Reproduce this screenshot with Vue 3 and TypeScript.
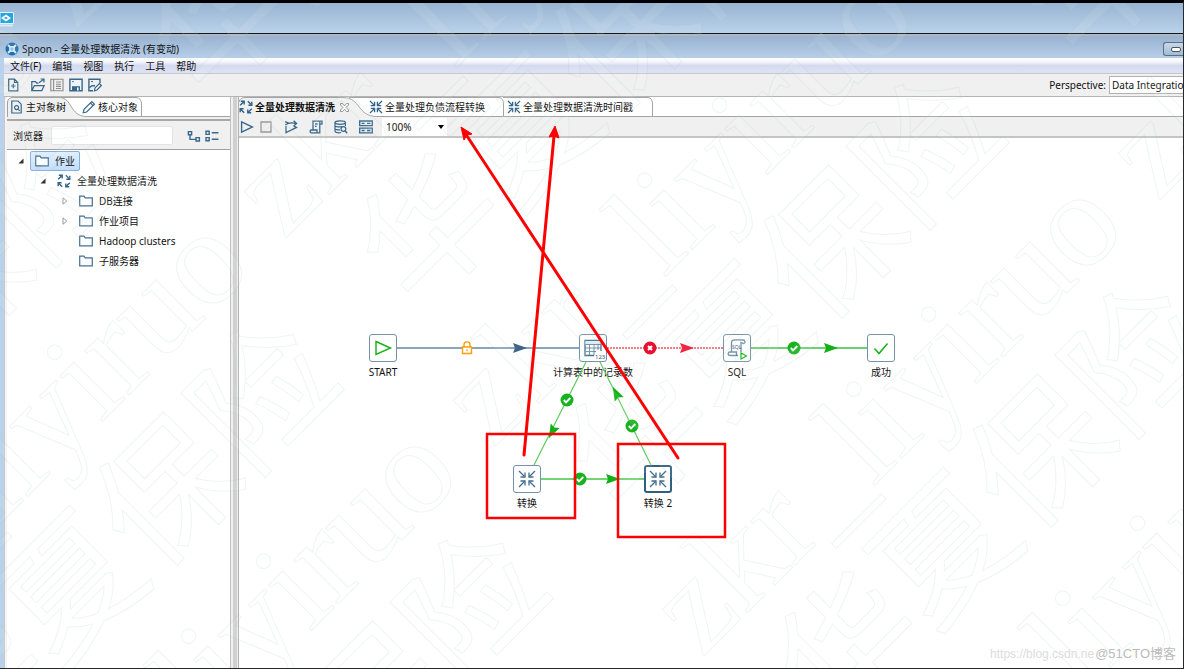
<script setup lang="ts">
import { ref } from 'vue'

interface Pt { x: number; y: number }
interface JobNode extends Pt { id: string; label: string; icon: string; active?: boolean }
interface TreeItem { label: string; icon: string; level: number; toggle: 'open' | 'closed' | 'none'; selected?: boolean }

const menus: string[] = ['文件(F)', '编辑', '视图', '执行', '工具', '帮助']

const fileTools = [
  { id: 'new', name: '新建' },
  { id: 'open', name: '打开' },
  { id: 'list', name: '浏览' },
  { id: 'save', name: '保存' },
  { id: 'saveas', name: '另存为' },
]

const runTools = [
  { id: 'run', name: '运行' },
  { id: 'stop', name: '停止' },
  { id: 'replay', name: '重放' },
  { id: 'script', name: '生成 SQL' },
  { id: 'dbsearch', name: '探测数据库' },
  { id: 'grid', name: '显示结果' },
]

const tree: TreeItem[] = [
  { label: '作业', icon: 'folder', level: 0, toggle: 'open', selected: true },
  { label: '全量处理数据清洗', icon: 'job', level: 1, toggle: 'open' },
  { label: 'DB连接', icon: 'folder', level: 2, toggle: 'closed' },
  { label: '作业项目', icon: 'folder', level: 2, toggle: 'closed' },
  { label: 'Hadoop clusters', icon: 'folder', level: 2, toggle: 'none' },
  { label: '子服务器', icon: 'folder', level: 2, toggle: 'none' },
]

// Node centres, in canvas coordinates
const nodes: JobNode[] = [
  { id: 'start', label: 'START', icon: 'n-start', x: 144, y: 210 },
  { id: 'count', label: '计算表中的记录数', icon: 'n-table', x: 354, y: 210 },
  { id: 'sql', label: 'SQL', icon: 'n-sql', x: 498, y: 210 },
  { id: 'ok', label: '成功', icon: 'n-ok', x: 642, y: 210 },
  { id: 't1', label: '转换', icon: 'n-trans', x: 288, y: 341 },
  { id: 't2', label: '转换 2', icon: 'n-trans', x: 419, y: 341, active: true },
]

const checks: Pt[] = [
  { x: 555, y: 210 },
  { x: 328, y: 262 },
  { x: 393, y: 288 },
  { x: 341, y: 341 },
]

const arrows = [
  { x: 281, y: 210, a: 0, c: 'slate' },
  { x: 448, y: 210, a: 0, c: 'red' },
  { x: 592, y: 210, a: 0, c: 'green' },
  { x: 313, y: 294, a: 117, c: 'green' },
  { x: 377, y: 255, a: -117, c: 'green' },
  { x: 374, y: 341, a: 0, c: 'green' },
]

// Watermark lattice along the two diagonals; only tiles that reach the page are kept
const marks: Pt[] = []
for (let col = -1; col <= 1; col++) {
  for (let row = -1; row <= 4; row++) {
    const u = 44 + 912 * col
    const v = 105 + 418 * row
    const x = Math.round((u + v) / 2)
    const y = Math.round((v - u) / 2)
    if (x > -420 && x < 1184 && y > -80 && y < 1080) marks.push({ x, y })
  }
}

const search = ref('')
const zoom = ref('100%')
const perspective = ref('Data Integration')
</script>

<template>
  <div class="page">
    <svg class="defs" aria-hidden="true">
      <symbol id="job" viewBox="0 0 14 14">
        <g stroke="#2f6288" stroke-width="1.4" fill="none">
          <path d="M1.200 5.200 L5 1.400 M8.800 1.200 L12.600 5 M5.200 12.800 L1.400 9 M12.800 8.800 L9 12.600" />
          <path d="M1.800 1.200 H5.200 V4.600 M12.800 1.800 V5.200 H9.400 M1.200 12.200 V8.800 H4.600 M8.800 9.400 V12.800 H12.200" />
        </g>
      </symbol>
      <symbol id="trans" viewBox="0 0 14 14">
        <g stroke="#2f6288" stroke-width="1.3" fill="none">
          <path d="M1 1 L5.4 5.4 M13 1 L8.6 5.4 M1 13 L5.4 8.6 M13 13 L8.6 8.6" />
          <path d="M5.6 1.8 V5.6 H1.8 M8.4 1.8 V5.6 H12.2 M1.8 8.4 H5.6 V12.2 M12.2 8.4 H8.4 V12.2" />
        </g>
      </symbol>
      <symbol id="folder" viewBox="0 0 14 14">
        <path d="M.7 2.2 H5 L6.2 3.9 H13.3 V11.8 H.7 Z" fill="#fbfdff" stroke="#456f90" stroke-width="1.2" />
      </symbol>
      <symbol id="new" viewBox="0 0 14 14">
        <path d="M1.7 1.2 H7.5 L10.8 4.5 V12.8 H1.7 Z M7.5 1.2 V4.5 H10.8 M4 8 H8.6 M6.3 5.7 V10.3" fill="none" stroke="#38688b" stroke-width="1.2" />
      </symbol>
      <symbol id="open" viewBox="0 0 14 14">
        <path d="M.8 12.6 V3.6 H4.6 L5.8 5.2 H7.5 M.8 12.6 L3.4 7.6 H13.2 L10.8 12.6 Z M8 4.8 L12.4 1.6 M9.6 1 H13 V4.4" fill="none" stroke="#38688b" stroke-width="1.2" />
      </symbol>
      <symbol id="list" viewBox="0 0 14 14">
        <path d="M.8 1.2 H13 V12.8 H.8 Z M3.6 1.2 V12.8 M6 4 H11 M6 6.2 H11 M6 8.4 H11 M6 10.5 H11" fill="none" stroke="#8b8b8b" stroke-width="1.1" />
      </symbol>
      <symbol id="save" viewBox="0 0 14 14">
        <path d="M.9 1.2 H13.1 V12.8 H.9 Z" fill="#eef4f8" stroke="#38688b" stroke-width="1.4" />
        <path d="M3 8.2 H11 V12.6 H3 Z" fill="#38688b" />
        <path d="M8 9.6 H9.6 V12.4 H8 Z" fill="#fff" />
        <path d="M3.2 3.6 H4.8" stroke="#38688b" />
      </symbol>
      <symbol id="saveas" viewBox="0 0 14 14">
        <path d="M12 5 V1.2 H.9 V12.8 H5 M1 10 L4 7.8 H7" fill="none" stroke="#38688b" stroke-width="1.4" />
        <path d="M3 3.6 H5" stroke="#38688b" />
        <path d="M6.4 12.8 L7 10 L11.4 5.6 L13.3 7.5 L9 12 Z" fill="#fff" stroke="#38688b" stroke-width="1.2" />
      </symbol>
      <symbol id="doc" viewBox="0 0 14 14">
        <path d="M1.8 1 H8 L11.2 4.2 V13 H1.8 Z M8.4 9.4 L9.6 11" fill="none" stroke="#38688b" stroke-width="1.2" />
        <circle cx="6.6" cy="7.6" r="2" fill="none" stroke="#38688b" stroke-width="1.1" />
      </symbol>
      <symbol id="pencil" viewBox="0 0 14 14">
        <path d="M1.2 12.8 L2 9.4 L9.8 1.6 L12.4 4.2 L4.6 12 Z M8.4 3 L11 5.6" fill="#fff" stroke="#38688b" stroke-width="1.2" />
      </symbol>
      <symbol id="run" viewBox="0 0 14 14">
        <path d="M1.6 1.8 L12.6 7 L1.6 12.2 Z" fill="none" stroke="#38688b" stroke-width="1.4" />
      </symbol>
      <symbol id="stop" viewBox="0 0 14 14">
        <path d="M2 2 H12 V12 H2 Z" fill="none" stroke="#999" stroke-width="1.3" />
      </symbol>
      <symbol id="replay" viewBox="0 0 14 14">
        <path d="M2 6 V12.600 L12.500 7.400 L9.500 5.900 M1.200 1.600 L5 3.400 M1.200 5 C4 2.800 8 2.600 11.800 3.400 M9.600 .8 L12.600 3.500 L9.600 6" fill="none" stroke="#38688b" stroke-width="1.300" />
      </symbol>
      <symbol id="script" viewBox="0 0 14 14">
        <path d="M4 9.4 V1.2 H13 V4 H10.8 V12.8 H2.2 C.8 12.8 .8 10 2.2 10 H8 V12.6 M10.8 4 V1.4 M6 4 H8.6 M6 6.4 H7.6" fill="none" stroke="#38688b" stroke-width="1.3" />
      </symbol>
      <symbol id="dbsearch" viewBox="0 0 14 14">
        <path d="M1 2.6 V11 C1 13 6 13 7 12.4 M11.4 2.6 V6 M1 5.4 C1 7.2 7 7 8 6.4 M1 8.4 C1 9.8 4 10 6 9.8" fill="none" stroke="#38688b" stroke-width="1.2" />
        <ellipse cx="6.2" cy="2.6" rx="5.2" ry="1.7" fill="none" stroke="#38688b" stroke-width="1.2" />
        <circle cx="9.4" cy="9" r="2.4" fill="none" stroke="#38688b" stroke-width="1.2" />
        <path d="M11 10.8 L13.2 13.2" stroke="#38688b" stroke-width="1.4" />
      </symbol>
      <symbol id="grid" viewBox="0 0 14 14">
        <path d="M.7 1 H13.3 V5.6 H.7 Z M.7 8.2 H13.3 V12.9 H.7 Z" fill="#e6eef4" stroke="#38688b" stroke-width="1.3" />
        <path d="M2.6 3.3 H5.6 M8 3.3 H11.4 M2.6 10.5 H5.6 M8 10.5 H11.4" stroke="#38688b" stroke-width="1.3" />
      </symbol>
      <symbol id="treeexp" viewBox="0 0 14 14">
        <path d="M1.4 2.600 H4.6 V5.800 H1.4 Z M9 8.600 H12.4 V12 H9 Z M3 6 V10.400 H9" fill="none" stroke="#38688b" stroke-width="1.4" />
      </symbol>
      <symbol id="treecol" viewBox="0 0 14 14">
        <path d="M1 2.200 H4.200 V5.400 H1 Z M1 8.600 H4.200 V11.800 H1 Z M6.800 3.800 H13.400 M6.800 10.200 H13.400" fill="none" stroke="#38688b" stroke-width="1.4" />
      </symbol>
      <symbol id="n-start" viewBox="0 0 28 28">
        <path d="M7 7.5 L21.5 14 L7 20.5 Z" fill="#fff" stroke="#12b312" stroke-width="1.4" />
      </symbol>
      <symbol id="n-ok" viewBox="0 0 28 28">
        <path d="M7.5 14.5 L12 19.5 L20.5 9.5" fill="none" stroke="#12b312" stroke-width="1.5" />
      </symbol>
      <symbol id="n-table" viewBox="0 0 28 28">
        <path d="M15 21.5 H6 V6.5 H22 V17" fill="#fff" stroke="#44708f" stroke-width="1.3" />
        <path d="M6.5 7 H21.5 V10 H6.5 Z" fill="#d9edf3" />
        <path d="M6 10.5 H22 M6 14 H22 M6 17.6 H17 M10.5 10.5 V21.5 M15 10.5 V21.5 M19 10.5 V16" fill="none" stroke="#6d8da5" stroke-width="1" />
        <text x="16" y="25" font-size="6" fill="#35586f">123</text>
      </symbol>
      <symbol id="n-sql" viewBox="0 0 28 28">
        <path d="M8.5 17.5 V9 C8.500 5 11 6 20 6 C22.500 6 22.500 9.500 20.500 9.500 L18 8.500 V18 M15 21.500 H7 C4.500 21.500 4.500 18 7 18 H13.500 V21" fill="none" stroke="#6d8da5" stroke-width="1.300" />
        <text x="9" y="15" font-size="5" fill="#35586f">SQL</text>
        <path d="M18 19 L23.500 22 L18 25 Z" fill="#fff" stroke="#12b312" stroke-width="1.200" />
      </symbol>
      <symbol id="n-trans" viewBox="0 0 28 28">
        <g fill="none" stroke="#446d8d" stroke-width="1.3">
          <path d="M6 6 L12 12 M22 6 L16 12 M6 22 L12 16 M22 22 L16 16" />
          <path d="M12 7.500 V12 H7.500 M16 7.500 V12 H20.500 M7.500 16 H12 V20.500 M20.500 16 H16 V20.500" />
        </g>
      </symbol>
    </svg>

    <div class="outer-bar">
      <svg width="14" height="16" viewBox="0 0 14 16" aria-hidden="true">
        <path d="M0 .5 H13.500 V11.500 H0 Z" fill="#26a5e4" stroke="#e6f4fb" />
        <path d="M6 2.500 L11 6 L6 9.500 L1 6 Z" fill="#fff" />
        <path d="M4 6 L6 4.700 L8 6 L6 7.300 Z" fill="#26a5e4" />
        <path d="M0 13.500 H13" stroke="#dde7ef" stroke-width="2" />
      </svg>
    </div>

    <header class="title-bar">
      <svg width="14" height="14" viewBox="0 0 14 14" aria-hidden="true">
        <circle cx="7" cy="7" r="6.500" fill="#1f6fae" />
        <path d="M3 3 L11 11 M11 3 L3 11" stroke="#dcecf8" stroke-width="1.800" />
        <circle cx="7" cy="7" r="2.400" fill="#8cc2e8" stroke="#fff" />
      </svg>
      <h1>Spoon - 全量处理数据清洗 (有变动)</h1>
      <button class="minimize" aria-label="最小化"><i></i></button>
    </header>

    <div class="frame">
      <nav class="menu">
        <button v-for="m in menus" :key="m">{{ m }}</button>
      </nav>

      <div class="toolbar">
        <button v-for="t in fileTools" :key="t.id" :class="t.id" :aria-label="t.name">
          <svg width="14" height="14"><use :href="'#' + t.id" /></svg>
        </button>
        <label for="perspective">Perspective:</label>
        <select id="perspective" v-model="perspective">
          <option>Data Integration</option>
        </select>
      </div>

      <div class="body">
        <aside class="side">
          <div class="tabs" role="tablist">
            <svg class="tab-shape" height="20" aria-hidden="true">
              <rect width="100%" height="20" fill="#fff" />
              <path d="M0 20 V5 Q1 .5 6 .5 H52 C66 .5 62 19.500 80 19.500 V20 Z" fill="#f0f0f0" />
              <path d="M.5 20 V5 Q1 .5 6 .5 H52 C66 .5 62 19.500 80 19.500 H600 M54 .5 H129 Q134.500 1 134.500 7 V19" fill="none" stroke="#a3a3a3" />
            </svg>
            <button role="tab" aria-selected="true" class="t-main"><svg width="14" height="14"><use href="#doc" /></svg>主对象树</button>
            <button role="tab" aria-selected="false"><svg width="14" height="14"><use href="#pencil" /></svg>核心对象</button>
          </div>
          <div class="browse">
            <label for="search">浏览器</label>
            <input id="search" v-model="search" type="text" />
            <button aria-label="展开全部"><svg width="14" height="14"><use href="#treeexp" /></svg></button>
            <button aria-label="折叠全部"><svg width="14" height="14"><use href="#treecol" /></svg></button>
          </div>
          <ul class="tree" role="tree">
            <li v-for="item in tree" :key="item.label" role="treeitem" :aria-level="item.level + 1" :class="'level-' + item.level">
              <span class="toggle">
                <svg v-if="item.toggle === 'open'" width="6" height="6" aria-hidden="true"><path d="M5.500 .5 V5.500 H.5 Z" fill="#333" /></svg>
                <svg v-else-if="item.toggle === 'closed'" width="6" height="8" aria-hidden="true"><path d="M1 .8 L4.800 4 L1 7.200 Z" fill="#fff" stroke="#999" /></svg>
              </span>
              <span class="entry" :class="{ selected: item.selected }">
                <svg width="14" height="14" aria-hidden="true"><use :href="'#' + item.icon" /></svg>
                <span>{{ item.label }}</span>
              </span>
            </li>
          </ul>
        </aside>

        <div class="sash"></div>

        <main class="work">
          <div class="tabs" role="tablist">
            <svg class="tab-shape" height="20" aria-hidden="true">
              <rect width="100%" height="20" fill="#fff" />
              <path d="M0 20 V5 Q1 .5 6 .5 H104 C122 .5 118 19.500 138 19.500 V20 Z" fill="#f0f0f0" />
              <path d="M0 5 Q1 .5 6 .5 H104 C122 .5 118 19.500 138 19.500 H4000 M110 .5 H260 Q264.500 1 264.500 7 V19 M264 .5 H409 Q413.500 1 413.500 7 V19" fill="none" stroke="#a3a3a3" />
            </svg>
            <button role="tab" aria-selected="true" class="w-main">
              <svg width="14" height="14"><use href="#job" /></svg><b>全量处理数据清洗</b>
              <svg class="close" width="9" height="9" aria-hidden="true"><path d="M.5 .5 H2.500 L4.500 2.800 L6.500 .5 H8.500 V2 L6 4.500 L8.500 7 V8.500 H6.500 L4.500 6.200 L2.500 8.500 H.5 V7 L3 4.500 L.5 2 Z" fill="#fff" stroke="#777" stroke-width=".8" /></svg>
            </button>
            <button role="tab" aria-selected="false" class="w-second"><svg width="14" height="14"><use href="#trans" /></svg>全量处理负债流程转换</button>
            <button role="tab" aria-selected="false"><svg width="14" height="14"><use href="#trans" /></svg>全量处理数据清洗时间戳</button>
          </div>

          <div class="run-bar">
            <button v-for="t in runTools" :key="t.id" :class="t.id" :aria-label="t.name">
              <svg width="14" height="14"><use :href="'#' + t.id" /></svg>
            </button>
            <span class="zoom">
              <select v-model="zoom" aria-label="缩放"><option>100%</option></select>
              <i></i>
            </span>
          </div>

          <div class="canvas">
            <div v-for="n in nodes" :key="n.id" class="node" :class="{ active: n.active }" :style="{ left: n.x + 'px', top: n.y + 'px' }">
              <button :aria-label="n.label"><svg width="28" height="28"><use :href="'#' + n.icon" /></svg></button>
              <span>{{ n.label }}</span>
            </div>
            <svg class="hops" aria-hidden="true">
              <path d="M158 210 H340" stroke="#8ba4b9" stroke-width="2" />
              <path d="M368 210 H484" stroke="#f0505f" stroke-width="1.500" stroke-dasharray="2 1" />
              <path d="M512 210 H628" stroke="#6fd06f" stroke-width="2" />
              <path d="M302 341 H405" stroke="#46c546" stroke-width="1.500" />
              <path d="M347 224 L295 327 M412 327 L361 224" stroke="#5ccb5c" stroke-width="1.200" />
              <path v-for="(a, i) in arrows" :key="i" d="M-7 -5 L7 0 L-7 5 L-5 0 Z" :class="a.c" :transform="`translate(${a.x} ${a.y}) rotate(${a.a})`" />
              <g v-for="(c, i) in checks" :key="'c' + i" :transform="`translate(${c.x} ${c.y})`">
                <circle r="6.500" fill="#17b21d" />
                <path d="M-3.200 0 L-1 2.300 L3.300 -2" fill="none" stroke="#fff" stroke-width="1.900" />
              </g>
              <circle cx="411" cy="210" r="6.500" fill="#e8102f" />
              <path d="M409 208 L413 212 M413 208 L409 212" stroke="#fff" stroke-width="2" />
              <g fill="#fff" stroke="#ff9d0a" stroke-width="1.400">
                <path d="M225 209 V206.500 C225 203 231 203 231 206.500 V209" />
                <path d="M223.500 209 H232.500 V215.500 H223.500 Z" />
                <path d="M228 211.500 V213" />
              </g>
            </svg>
          </div>
        </main>
      </div>
    </div>

    <svg class="overlay" aria-hidden="true">
      <g class="mark">
        <g v-for="(m, i) in marks" :key="i" :transform="`translate(${m.x} ${m.y}) rotate(-45)`">
          <text x="0" y="0">zkr_liyiruo</text>
          <text x="44" y="144">华夏保险</text>
        </g>
      </g>
      <g fill="none" stroke="#fe0000">
        <path d="M487 434 H575 V518 H487 Z M618 444 H725 V537 H618 Z" stroke-width="2.500" />
        <path d="M524 455 L554 136 M678 458 L467 136" stroke-width="3" stroke-linecap="round" />
      </g>
      <path d="M555 126 L559 138 L554 136 L549 137 Z M461 127 L472 134 L467 135 L464 140 Z" fill="#fe0000" stroke="#fe0000" />
    </svg>

    <div class="credit"><span>https://blog.csdn.ne</span><b>@51CTO博客</b></div>
  </div>
</template>

<style>
html,
body {
  margin: 0;
  overflow: hidden;
}
</style>

<style scoped>
.page {
  position: relative;
  display: flex;
  flex-direction: column;
  box-sizing: border-box;
  height: 100vh;
  overflow: hidden;
  border-top: 3px solid #000;
  border-right: 1px solid #26282c;
  border-bottom: 1px solid #26282c;
  background: #b9d1ea;
  color: #111;
  font: 10px/14px "Noto Sans", "Noto Sans CJK SC", sans-serif;
}
.page * {
  box-sizing: border-box;
}
.defs {
  position: absolute;
  width: 0;
  height: 0;
}
svg {
  flex: none;
  display: block;
}
button {
  display: flex;
  align-items: center;
  margin: 0;
  padding: 0;
  border: 0;
  background: none;
  color: inherit;
  font: inherit;
  white-space: nowrap;
}
select,
input {
  margin: 0;
  color: inherit;
  font: inherit;
  appearance: none;
  border-radius: 0;
}
.outer-bar {
  flex: none;
  display: flex;
  align-items: center;
  height: 31px;
  padding-top: 4px;
  border-bottom: 1px solid #15181c;
  background: linear-gradient(#98b4d2, #bad2ea);
}
.title-bar {
  flex: none;
  display: flex;
  align-items: center;
  gap: 3px;
  height: 24px;
  padding: 4px 0 0 5px;
  border-top: 2px solid #aeb8c3;
  background: linear-gradient(#98b2d0, #b6cee8);
}
.title-bar h1 {
  margin: 0;
  font-size: 10px;
  font-weight: 400;
}
.minimize {
  justify-content: flex-end;
  width: 20px;
  height: 14px;
  margin-left: auto;
  padding-right: 2px;
  border: 1px solid #5c6f87;
  border-right: 0;
  border-radius: 3px 0 0 3px;
  background: linear-gradient(#c9d8e8, #a3bbd6);
}
.minimize i {
  width: 10px;
  height: 5px;
  border: 1px solid #4d545e;
  border-radius: 2px;
  background: #fff;
}
.frame {
  flex: 1;
  display: flex;
  flex-direction: column;
  min-height: 0;
  margin-left: 4px;
  background: #f0f0f0;
}
.menu {
  flex: none;
  display: flex;
  gap: 11px;
  height: 16px;
  padding-left: 6px;
  border-bottom: 1px solid #c6c8d0;
  background: linear-gradient(#fff, #f4f6fc 25%, #d5dbee 50%, #dde3f5);
}
.toolbar {
  flex: none;
  display: flex;
  align-items: center;
  height: 22px;
  padding-left: 3px;
}
.toolbar .open {
  margin-left: 10px;
}
.toolbar .list,
.toolbar .save,
.toolbar .saveas {
  margin-left: 5px;
}
.toolbar label {
  margin-left: auto;
  margin-right: 3px;
}
.toolbar select {
  width: 74px;
  height: 18px;
  padding: 0 0 0 2px;
  border: 1px solid #b2b2b2;
  border-right: 0;
  background: #fff;
}
.body {
  flex: 1;
  display: flex;
  min-height: 0;
  border-top: 1px solid #b4b4b4;
}
.side {
  flex: none;
  display: flex;
  flex-direction: column;
  width: 227px;
  border-left: 1px solid #c9c9c9;
  border-right: 1px solid #c0c0c0;
  padding-left: 2px;
  background: #f4f4f4;
}
.tabs {
  position: relative;
  flex: none;
  display: flex;
  height: 20px;
  background: #fff;
}
.tabs button {
  position: relative;
  gap: 2px;
}
.tab-shape {
  position: absolute;
  top: 0;
  left: 0;
  width: 100%;
}
.t-main {
  margin: 0 16px 0 3px;
}
.browse {
  flex: none;
  display: flex;
  align-items: center;
  height: 33px;
  padding: 5px 7px 0 6px;
  background: linear-gradient(#f0f0f0 2px, #a8a8a8 2px, #a8a8a8 4px, #f0f0f0 4px);
  border-bottom: 1px solid #a0a0a0;
}
.browse input {
  flex: 1;
  min-width: 0;
  height: 19px;
  margin: 0 14px 0 8px;
  border: 1px solid #e0e3e8;
  border-radius: 2px;
  background: #fff;
}
.browse button {
  margin-right: 4px;
}
.tree {
  flex: 1;
  display: flex;
  flex-direction: column;
  margin: 0;
  padding: 1px 0 0;
  list-style: none;
  background: #fff;
}
.tree li {
  display: flex;
  align-items: center;
  height: 20px;
}
.level-0 {
  padding-left: 11px;
}
.level-1 {
  padding-left: 33px;
}
.level-2 {
  padding-left: 55px;
}
.toggle {
  display: flex;
  width: 12px;
}
.entry {
  display: flex;
  align-items: center;
  gap: 6px;
  height: 20px;
  padding: 0 4px;
  border: 1px solid transparent;
  border-radius: 2px;
}
.entry.selected {
  border-color: #84acdd;
  background: linear-gradient(#e2effd, #c1dcfc);
}
.sash {
  flex: none;
  width: 7px;
  border-left: 2px solid #f0f0f0;
  border-right: 1px solid #f0f0f0;
  background: #d0d0d0;
}
.work {
  flex: 1;
  display: flex;
  flex-direction: column;
  min-width: 0;
  border-left: 1px solid #b0b0b0;
}
.w-main {
  margin-right: 20px;
}
.w-main b {
  font-weight: 700;
}
.close {
  margin-left: 3px;
}
.w-second {
  margin-right: 22px;
}
.run-bar {
  flex: none;
  display: flex;
  align-items: center;
  height: 21px;
  padding: 1px 0 0 1px;
  border-bottom: 2px solid #c4c4c4;
  background: #f0f0f0;
}
.run-bar button {
  margin-right: 5px;
}
.run-bar .stop,
.run-bar .replay,
.run-bar .script,
.run-bar .dbsearch {
  margin-right: 11px;
}
.run-bar .grid {
  margin-right: 9px;
}
.zoom {
  position: relative;
  display: flex;
  align-items: center;
}
.zoom select {
  width: 65px;
  height: 18px;
  padding: 0 4px;
  border: 0;
  background: #fff;
}
.zoom i {
  position: absolute;
  right: 3px;
  border: 3px solid transparent;
  border-top: 4px solid #000;
  border-bottom: 0;
  pointer-events: none;
}
.canvas {
  position: relative;
  flex: 1;
  min-height: 0;
  overflow: hidden;
  background: #fff;
}
.hops {
  position: absolute;
  top: 0;
  left: 0;
  width: 100%;
  height: 100%;
  fill: none;
  pointer-events: none;
}
.hops .slate {
  fill: #3d6687;
}
.hops .red {
  fill: #ee1532;
}
.hops .green {
  fill: #10b016;
}
.node {
  position: absolute;
  display: flex;
  flex-direction: column;
  align-items: center;
  gap: 3px;
  width: 100px;
  margin: -14px 0 0 -50px;
}
.node button {
  justify-content: center;
  width: 28px;
  height: 28px;
  border: 1px solid #7591aa;
  border-radius: 3px;
  background: #fff;
}
.node.active button {
  border: 2px solid #315f82;
}
.node span {
  white-space: nowrap;
}
.overlay {
  position: absolute;
  top: -3px;
  left: 0;
  width: 100%;
  height: 100vh;
  pointer-events: none;
}
.mark {
  fill: #fff;
  fill-opacity: 0.08;
  stroke: #a8c8b8;
  stroke-opacity: 0.18;
  font-family: "Liberation Serif", "Noto Sans CJK SC", serif;
  font-size: 136px;
}
.credit {
  position: absolute;
  right: 7px;
  bottom: 5px;
  display: flex;
  align-items: center;
  gap: 1px;
  color: #dcdcdc;
  font: 12px/18px "Liberation Sans", "Noto Sans CJK SC", sans-serif;
}
.credit b {
  color: #bcbcbc;
  font-size: 13px;
  font-weight: 400;
}
</style>
